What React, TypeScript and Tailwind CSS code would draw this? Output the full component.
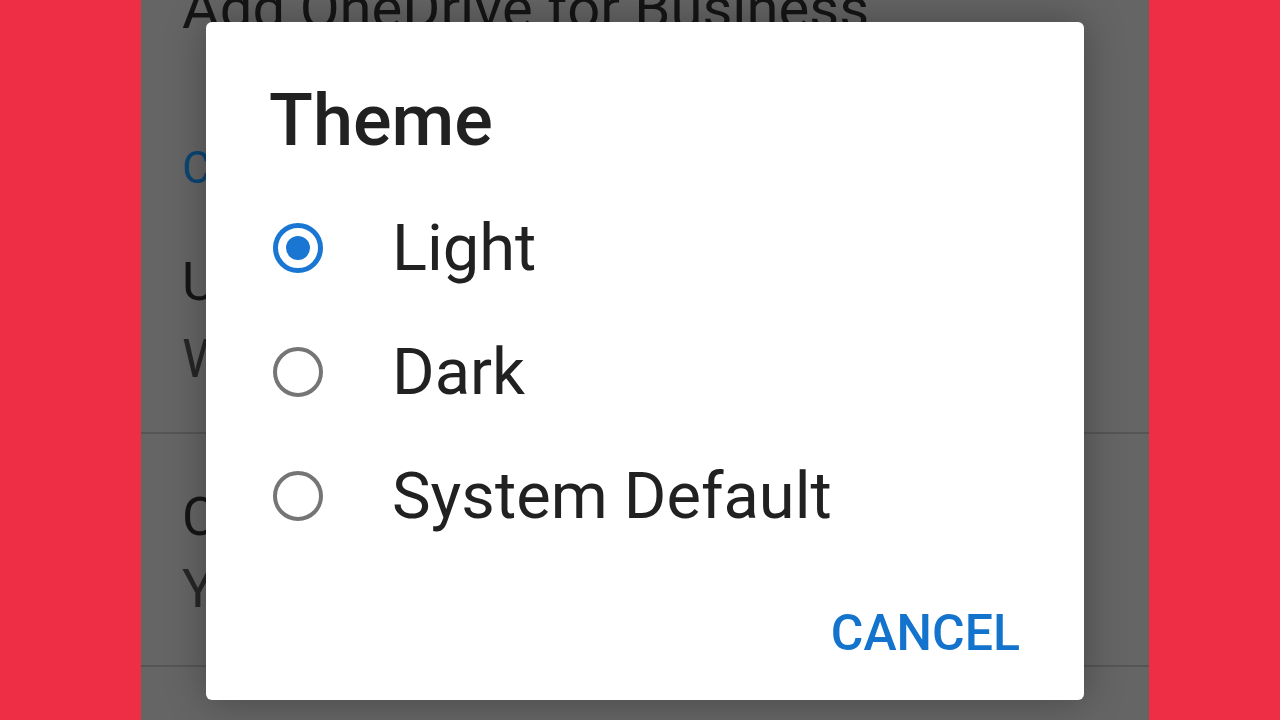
import React from 'react';

const options = ['Light', 'Dark', 'System Default'];

function Radio({ checked }: { checked: boolean }) {
  return (
    <svg width="50" height="50" viewBox="0 0 50 50" className="ml-[4px] shrink-0">
      {checked ? (
        <>
          <circle cx="25" cy="25" r="22.5" fill="none" stroke="#1976d2" strokeWidth="5" />
          <circle cx="25" cy="25" r="12" fill="#1976d2" />
        </>
      ) : (
        <circle cx="25" cy="25" r="23" fill="none" stroke="#757575" strokeWidth="4" />
      )}
    </svg>
  );
}

function BackgroundList() {
  return (
    <div className="flex flex-col text-[53px] leading-none text-[#151515] font-['Roboto',sans-serif]">
      <div className="pl-[41px] -mt-[21px] text-[58px]">Add OneDrive for Business</div>
      <div className="pl-[41px] mt-[109px] text-[44px] text-[#0b4573]">Customization</div>
      <div className="pl-[41px] mt-[66px]">Upload options</div>
      <div className="pl-[41px] mt-[24px] text-[#262626]">Wi-Fi only</div>
      <div className="mt-[46px] h-[2px] bg-[#555555]" />
      <div className="pl-[41px] mt-[57px]">Camera upload</div>
      <div className="pl-[41px] mt-[19px] text-[#262626]">You are not signed in</div>
      <div className="mt-[49px] h-[2px] bg-[#555555]" />
    </div>
  );
}

function ThemeDialog() {
  return (
    <div className="absolute left-[65px] top-[22px] w-[878px] h-[678px] bg-white rounded-[6px] shadow-[0_0_40px_rgba(0,0,0,0.3)] flex flex-col pl-[63px] pr-[64px] pt-[63px] font-['Roboto',sans-serif] text-[#212121]">
      <div className="text-[72px] leading-none font-medium">Theme</div>
      <div className="mt-[29px] flex flex-col">
        {options.map((o, i) => (
          <div key={o} className="h-[124px] flex items-center">
            <Radio checked={i === 0} />
            <span className="ml-[69px] text-[65px] leading-[124px]">{o}</span>
          </div>
        ))}
      </div>
      <div className="mt-[50px] flex justify-end">
        <span className="text-[50px] leading-none font-medium text-[#1473cc]">CANCEL</span>
      </div>
    </div>
  );
}

export default function App() {
  return (
    <div className="w-[1280px] h-[720px] flex overflow-hidden bg-[#ee2e44]">
      <div className="w-[141px] shrink-0 bg-[#ee2e44]" />
      <div className="relative w-[1008px] h-full bg-[#656565] overflow-hidden">
        <BackgroundList />
        <ThemeDialog />
      </div>
      <div className="flex-1 bg-[#ee2e44]" />
    </div>
  );
}
